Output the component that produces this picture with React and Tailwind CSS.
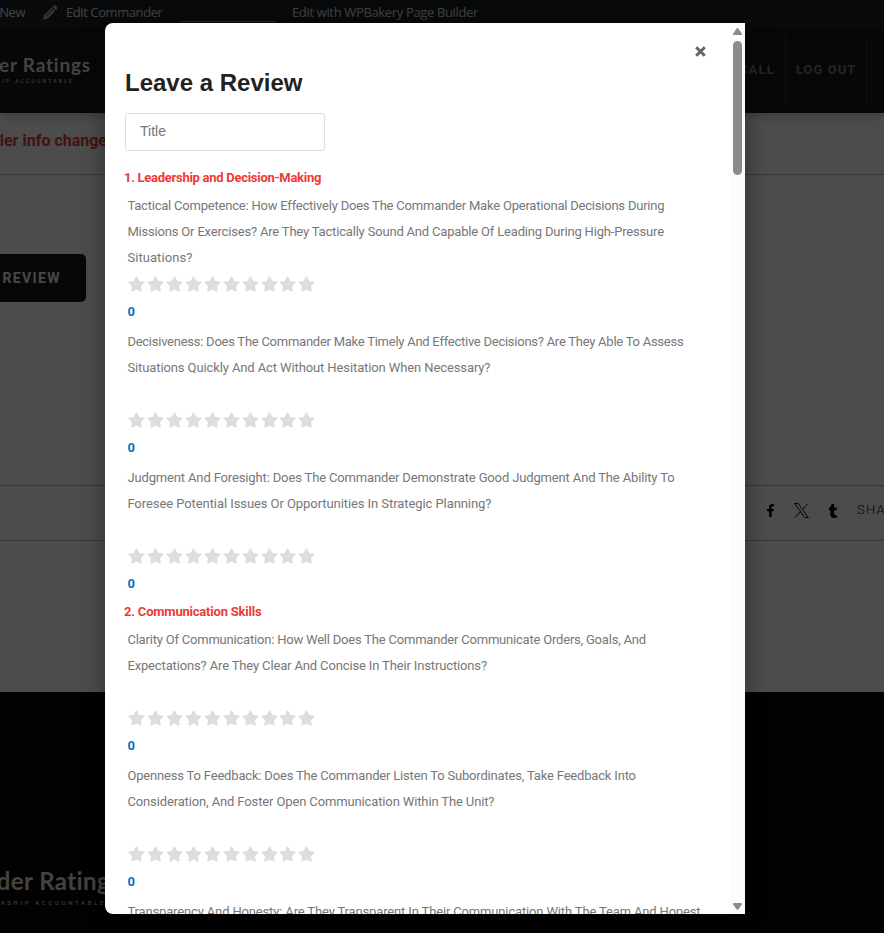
import { FaFacebookF, FaStar, FaTumblr } from 'react-icons/fa';

const sections = [
  {
    title: '1. Leadership and Decision-Making',
    tracking: 'tracking-[-0.28px]',
    questions: [
      [
        { text: 'Tactical Competence: How Effectively Does The Commander Make Operational Decisions During', tracking: 'tracking-[-0.211px]' },
        { text: 'Missions Or Exercises? Are They Tactically Sound And Capable Of Leading During High-Pressure', tracking: 'tracking-[-0.183px]' },
        { text: 'Situations?', tracking: 'tracking-[0.07px]' },
      ],
      [
        { text: 'Decisiveness: Does The Commander Make Timely And Effective Decisions? Are They Able To Assess', tracking: 'tracking-[-0.251px]' },
        { text: 'Situations Quickly And Act Without Hesitation When Necessary?', tracking: 'tracking-[-0.105px]' },
      ],
      [
        { text: 'Judgment And Foresight: Does The Commander Demonstrate Good Judgment And The Ability To', tracking: 'tracking-[-0.142px]' },
        { text: 'Foresee Potential Issues Or Opportunities In Strategic Planning?', tracking: 'tracking-[-0.073px]' },
      ],
    ],
  },
  {
    title: '2. Communication Skills',
    tracking: 'tracking-[-0.205px]',
    questions: [
      [
        { text: 'Clarity Of Communication: How Well Does The Commander Communicate Orders, Goals, And', tracking: 'tracking-[-0.203px]' },
        { text: 'Expectations? Are They Clear And Concise In Their Instructions?', tracking: 'tracking-[-0.142px]' },
      ],
      [
        { text: 'Openness To Feedback: Does The Commander Listen To Subordinates, Take Feedback Into', tracking: 'tracking-[-0.178px]' },
        { text: 'Consideration, And Foster Open Communication Within The Unit?', tracking: 'tracking-[-0.128px]' },
      ],
      [
        { text: 'Transparency And Honesty: Are They Transparent In Their Communication With The Team And Honest', tracking: 'tracking-[-0.148px]' },
      ],
    ],
  },
];

function Question({ lines }) {
  return (
    <div className="pl-[2.4px]">
      <div className="h-[78px] text-[13px] leading-[26px] text-[#777]">
        {lines.map((l) => (
          <p key={l.text} className={`whitespace-nowrap ${l.tracking}`}>{l.text}</p>
        ))}
      </div>
      <div className="flex h-[26px] items-center">
        {Array.from({ length: 10 }, (_, i) => (
          <span key={i} className="flex w-[18.9px] justify-center">
            <FaStar className="h-4 w-[17px] text-[#ddd]" />
          </span>
        ))}
      </div>
      <p className="h-7 pt-[2px] text-[13px] leading-[26px] font-bold text-[#0274be]">0</p>
    </div>
  );
}

function ReviewModal() {
  return (
    <div className="flex h-[891px] w-[640px] overflow-hidden rounded-l-lg bg-white shadow-[0_0_25px_rgba(0,0,0,0.4)]">
      <div className="flex-1 overflow-hidden pl-5">
        <div className="flex h-[42px] items-end justify-end pr-6">
          <svg className="mb-2 h-[11px] w-[11px]" viewBox="0 0 11 11" stroke="#666" strokeWidth="3">
            <path d="M1.2 1.2 9.8 9.8M9.8 1.2 1.2 9.8" />
          </svg>
        </div>
        <h2 className="h-12 pt-[2px] font-['Liberation_Sans',sans-serif] text-2xl leading-8 font-bold text-[#222]">Leave a Review</h2>
        <input
          className="block h-[38px] w-[200px] rounded-[3px] border border-[#ddd] px-[14px] pb-[2px] font-['Liberation_Sans',sans-serif] text-sm placeholder:text-[#757575]"
          placeholder="Title"
        />
        <div className="pt-[14px]">
          {sections.map((s) => (
            <section key={s.title} className="pb-[2px]">
              <h3 className={`-ml-px h-7 text-[13px] leading-[26px] font-bold text-[#ee3a36] ${s.tracking}`}>{s.title}</h3>
              <div className="flex flex-col gap-1">
                {s.questions.map((q) => <Question key={q[0].text} lines={q} />)}
              </div>
            </section>
          ))}
        </div>
      </div>
      <div className="flex w-[15px] flex-col items-center bg-[#fcfcfc] pt-[5px] pb-1">
        <svg className="h-[7px] w-[9px] shrink-0" viewBox="0 0 9 7" fill="#8b8b8b">
          <path d="M3.7.5Q4.5-.4 5.3.5L8.8 5.4Q9.3 7 8 7H1Q-.3 7 .2 5.4Z" />
        </svg>
        <div className="mt-[6px] h-[134px] w-[9px] rounded-full bg-[#8b8b8b]" />
        <svg className="mt-auto h-[7px] w-[9px] shrink-0" viewBox="0 0 9 7" fill="#8b8b8b">
          <path d="M3.7 6.5Q4.5 7.4 5.3 6.5L8.8 1.6Q9.3 0 8 0H1Q-.3 0 .2 1.6Z" />
        </svg>
      </div>
    </div>
  );
}

function AdminBar() {
  return (
    <div className="flex h-7 bg-[#1d2327] font-['Open_Sans',sans-serif] text-[13px] leading-[24px] whitespace-nowrap text-[#e0e1e2]">
      <div className="flex w-[25px] justify-end tracking-[-0.5px]">New</div>
      <svg className="mt-[5px] ml-[18px] h-[15px] w-[15px]" viewBox="0 0 15 15" fill="#a7aaad">
        <path d="M9.3 1.8 11 .3Q12 0 12.8.8L14.3 2.4Q15 3.2 14.2 4.1L13 5.4ZM8.5 2.7 12.2 6.3 4.6 13.7 0 14.7 1 10.1Z" />
        <path d="M3.4 10.8 9.7 4.7" stroke="#1d2327" strokeWidth="0.9" />
      </svg>
      <span className="ml-[8px] w-[97px] tracking-[-0.42px]">Edit Commander</span>
      <div className="ml-[17px] h-[22px] w-[95px] border-b border-dotted border-white" />
      <span className="ml-[17px] tracking-[-0.351px]">Edit with WPBakery Page Builder</span>
    </div>
  );
}

function Page() {
  return (
    <div className="h-[933px] overflow-hidden bg-white">
      <AdminBar />
      <header className="relative flex h-[85px] justify-between bg-[#181818] text-[13px] font-bold whitespace-nowrap text-[#7c7c7c] shadow-[0_2px_10px_rgba(0,0,0,0.25)]">
        <div className="flex w-[91px] flex-col items-end pt-[25px] text-[#e2dfd4]">
          <span className="font-['Lato',sans-serif] text-[19px] leading-6 tracking-[0.8px]">er Ratings</span>
          <span className="mr-[17px] text-[5px] leading-[8px] font-normal tracking-[2.2px]">IP ACCOUNTABLE</span>
        </div>
        <nav className="flex h-[80px] pt-[5px] leading-[73px]">
          <span className="border-r border-[#303030] pr-[10px] tracking-[1.2px]">CALL</span>
          <span className="w-[81px] border-r border-[#303030] pl-[10px] tracking-[1px]">LOG OUT</span>
          <span className="w-[17px]" />
        </nav>
      </header>
      <div className="flex h-[62px] border-b border-[#bbb]">
        <p className="flex w-[107px] justify-end pt-4 text-base leading-6 font-bold whitespace-nowrap text-[#e03c3a]">ler info change</p>
      </div>
      <div className="h-[310px] pt-[79px]">
        <div className="flex h-12 w-[86px] justify-end rounded-r-[5px] bg-[#181818] pr-[25px] text-sm leading-[48px] font-bold tracking-[1.4px] whitespace-nowrap text-[#eee]">REVIEW</div>
      </div>
      <div className="flex h-[56px] items-center justify-end border-y border-[#bbb] pb-[5px] text-black">
        <FaFacebookF className="h-[13px] w-[9px]" />
        <svg className="ml-[19px] h-[15px] w-[15px]" viewBox="0 0 15 15" fill="none" stroke="#111">
          <path d="M.6.5H4.2L14.4 14.5H10.8ZM13.8.5 8.4 6.8M6.6 8.6 1 14.5" />
        </svg>
        <FaTumblr className="ml-[19px] h-[14px] w-[10px]" />
        <span className="ml-[19px] w-[27px] pb-px text-[13px] font-light tracking-[1.2px] whitespace-nowrap text-[#222]">SHA</span>
      </div>
      <div className="h-[151px]" />
      <footer className="h-[241px] bg-[#080808] pt-[174px] text-[#e2dfd4]">
        <div className="flex w-[121px] flex-col items-end font-bold whitespace-nowrap">
          <span className="font-['Lato',sans-serif] text-[24px] leading-[30px] tracking-[0.4px]">der Ratings</span>
          <span className="mr-[15px] text-[6px] leading-[14px] font-normal tracking-[2.65px]">RSHIP ACCOUNTABLE</span>
        </div>
      </footer>
    </div>
  );
}

export default function App() {
  return (
    <div className="relative h-[933px] w-full overflow-hidden font-['Roboto',sans-serif]">
      <Page />
      <div className="absolute inset-0 bg-black/70 pt-[23px] pl-[105px]">
        <ReviewModal />
      </div>
    </div>
  );
}
